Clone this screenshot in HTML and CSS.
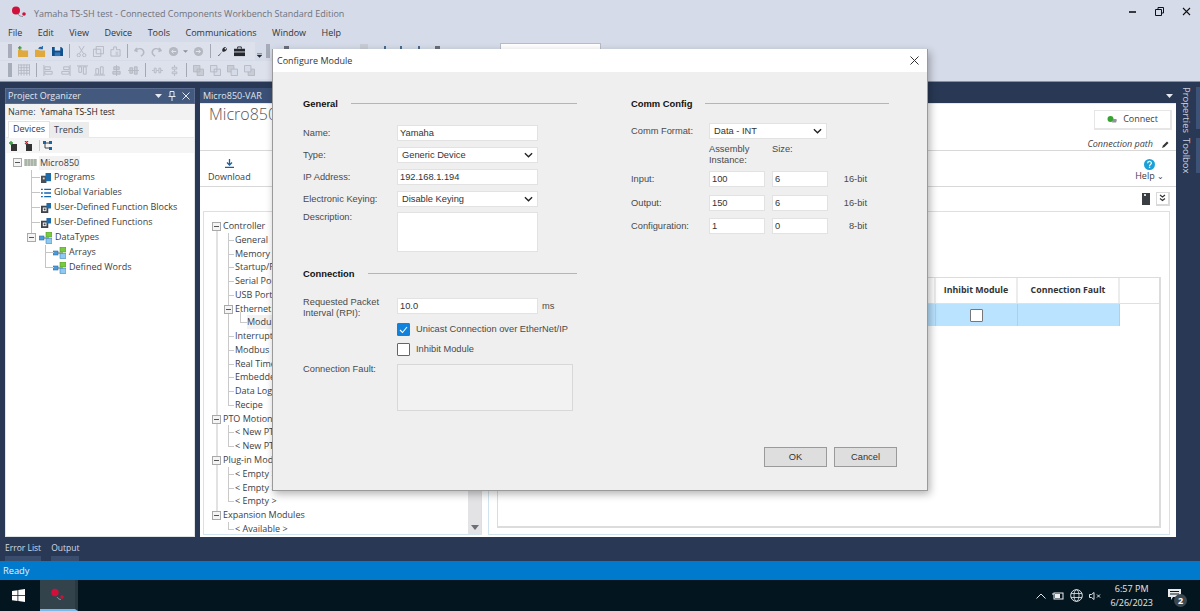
FILE: index.html
```html
<!DOCTYPE html>
<html lang="en">
<head>
<meta charset="utf-8">
<title>Configure Module</title>
<link rel="stylesheet" href="styles.css">
</head>
<body>
<svg class="defs" width="0" height="0">
  <symbol id="i-exp" viewBox="0 0 9 9"><rect x=".5" y=".5" width="8" height="8" fill="#f4f4f4" stroke="#a9a9a9"/><path d="M2 4.5h5" stroke="#555"/></symbol>
  <symbol id="i-prog" viewBox="0 0 11 11"><rect x="0" y="3" width="6" height="8" fill="#4b4f55"/><rect x="5" y="0" width="6" height="9" fill="#1f6aa8"/><rect x="2" y="5" width="2" height="2" fill="#ddd"/></symbol>
  <symbol id="i-list" viewBox="0 0 11 11"><path d="M0 1.5h2M0 5.5h2M0 9.5h2M3.500 1.500h7.500M3.500 5.500h7.500M3.500 9.500h7.500" stroke="#1266b0" stroke-width="1.600"/></symbol>
  <symbol id="i-fn" viewBox="0 0 11 11"><rect x="0" y="3" width="8" height="8" fill="#3f434a"/><rect x="6" y="0" width="5" height="6" fill="#1f6aa8"/><rect x="2" y="5" width="4" height="4" fill="#fff"/><rect x="3" y="6" width="2" height="2" fill="#3f434a"/></symbol>
  <symbol id="i-dt" viewBox="0 0 13 12"><path d="M3 6h7" stroke="#666"/><rect x="0" y="4" width="5" height="4" fill="#4d9bd6" stroke="#2a6ea8" stroke-width=".6"/><rect x="7" y="0" width="6" height="5" fill="#7ac943" stroke="#4e9b21" stroke-width=".6"/><rect x="7" y="6.500" width="6" height="5" fill="#8fc9ef" stroke="#3a86c0" stroke-width=".6"/></symbol>
  <symbol id="i-chev" viewBox="0 0 10 6"><path d="M1 1l4 4 4-4" fill="none" stroke="#222" stroke-width="1.500"/></symbol>
</svg>

<header class="titlebar">
  <svg class="applogo" width="22" height="12" viewBox="0 0 22 12"><circle cx="5" cy="4.500" r="4" fill="#d0103a"/><circle cx="13" cy="8" r="1.800" fill="#d0103a"/><path d="M7 8c1 2 3 2.500 5 2.500" fill="none" stroke="#8a8f98"/></svg>
  <span class="apptitle">Yamaha TS-SH test - Connected Components Workbench Standard Edition</span>
  <div class="winbtns">
    <svg width="9" height="9" viewBox="0 0 9 9"><path d="M1 5h7" stroke="#111" stroke-width="1.600"/></svg>
    <svg width="9" height="9" viewBox="0 0 9 9"><path d="M3 2V.5h5.500V6H7M.5 2.500H6.500V8.500H.5z" fill="none" stroke="#111"/></svg>
    <svg width="9" height="9" viewBox="0 0 9 9"><path d="M1 1l7 7M8 1l-7 7" stroke="#111" stroke-width="1.100"/></svg>
  </div>
</header>

<nav class="menubar">
  <span>File</span><span>Edit</span><span>View</span><span>Device</span><span>Tools</span><span>Communications</span><span>Window</span><span>Help</span>
</nav>

<div class="toolbars">
  <div class="tbrow">
    <div class="tbgroup">
      <i class="grip"></i>
      <svg class="ti" viewBox="0 0 12 12"><path d="M0 4h4l1 1h6v7H0z" fill="#e0a93d"/><path d="M2 0v4M0 2h4" stroke="#3a9a35" stroke-width="1.400"/></svg>
      <svg class="ti" viewBox="0 0 12 12"><path d="M0 4h4l1 1h6v7H0z" fill="#e0a93d"/><path d="M4 3c1-2 3-2 4 0M8 0v3H5" fill="none" stroke="#1a5fa8" stroke-width="1.200"/></svg>
      <svg class="ti" viewBox="0 0 12 12"><path d="M0 1h10l2 2v8H0z" fill="#10508f"/><rect x="3" y="1" width="6" height="4" fill="#dfe6f0"/><rect x="3" y="7" width="6" height="4" fill="#3a78b5"/></svg>
      <i class="sep"></i>
      <svg class="ti" viewBox="0 0 12 12"><path d="M3 0l5 8M9 0L4 8" stroke="#b5b8c0"/><circle cx="3" cy="10" r="1.800" fill="none" stroke="#b5b8c0"/><circle cx="9" cy="10" r="1.800" fill="none" stroke="#b5b8c0"/></svg>
      <svg class="ti" viewBox="0 0 12 12"><path d="M3.500.5h8v8h-8zM.5 3.500h8v8h-8z" fill="none" stroke="#b5b8c0"/></svg>
      <svg class="ti" viewBox="0 0 12 12"><path d="M1 4h3V1h3v3h4v7H1z" fill="none" stroke="#b5b8c0"/><rect x="6" y="6" width="3" height="5" fill="#c8ccd4"/></svg>
      <i class="sep"></i>
      <svg class="ti" viewBox="0 0 12 12"><path d="M3 2l-2 3 3 1M1.500 5c3-3 8-3 9 1 .5 2-1 4-3 5" fill="none" stroke="#b4b8c1" stroke-width="1.600"/></svg>
      <svg class="ti" viewBox="0 0 12 12"><path d="M9 2l2 3-3 1M10.500 5c-3-3-8-3-9 1-.5 2 1 4 3 5" fill="none" stroke="#b4b8c1" stroke-width="1.600"/></svg>
      <svg class="ti" viewBox="0 0 12 12"><circle cx="6" cy="6" r="5" fill="#b4b8c1"/><path d="M9 6H4M6 4L4 6l2 2" fill="none" stroke="#e4e7ef"/></svg>
      <svg class="tdrop" viewBox="0 0 6 3"><path d="M0 0h6L3 3z" fill="#8b8f98"/></svg>
      <svg class="ti" viewBox="0 0 12 12"><circle cx="6" cy="6" r="5" fill="#b4b8c1"/><path d="M3 6h5M6 4l2 2-2 2" fill="none" stroke="#e4e7ef"/></svg>
      <i class="sep"></i>
      <svg class="ti" viewBox="0 0 12 12"><path d="M1 11l5-5c-1-3 1-5 4-5L8 3l1 1 2-2c0 3-2 5-5 4l-4 5z" fill="#26282d"/></svg>
      <svg class="ti" viewBox="0 0 12 12"><path d="M4 3V1h4v2" fill="none" stroke="#26282d"/><rect y="3" width="12" height="8" fill="#26282d"/><path d="M0 6.500h12" stroke="#d6dbe9"/></svg>
      <svg class="tdrop chev" viewBox="0 0 6 5"><path d="M0 0h6M0 2h6L3 5z" fill="#26282d" stroke="#26282d" stroke-width=".5"/></svg>
    </div>
    <div class="tbhidden">
      <i class="grip"></i>
      <i class="mark mk1"></i><i class="mark mk2"></i><i class="mark mk3"></i><i class="mark mk4"></i><i class="mark mk5"></i><i class="mark mk6"></i>
      <div class="tbcombo"></div>
    </div>
  </div>
  <div class="tbrow">
    <div class="tbgroup low">
      <i class="grip"></i>
      <svg class="ti wide" viewBox="0 0 13 12"><path d="M.5 0v12M3.500 0v12M6.500 0v12M9.500 0v12M12.500 0v12M0 .5h13M0 3.500h13M0 6.500h13M0 9.500h13" stroke="#b4b8c1"/></svg>
      <i class="sep"></i>
      <svg class="ti" viewBox="0 0 12 12"><path d="M1 0v12M2 2h6v3H2zM2 7h8v3H2z" fill="none" stroke="#b4b8c1"/></svg>
      <svg class="ti" viewBox="0 0 12 12"><path d="M11 0v12M4 2h6v3H4zM2 7h8v3H2z" fill="none" stroke="#b4b8c1"/></svg>
      <svg class="ti" viewBox="0 0 12 12"><path d="M0 1h12M2 2v6h3V2zM7 2v8h3V2z" fill="none" stroke="#b4b8c1"/></svg>
      <svg class="ti" viewBox="0 0 12 12"><path d="M0 11h12M2 4v6h3V4zM7 2v8h3V2z" fill="none" stroke="#b4b8c1"/></svg>
      <svg class="ti" viewBox="0 0 12 12"><path d="M6 0v12M3 2h6v3H3zM2 7h8v3H2z" fill="#c8ccd4" stroke="#b4b8c1"/></svg>
      <svg class="ti" viewBox="0 0 12 12"><path d="M0 6h12M2 3v6h3V3zM7 2v8h3V2z" fill="#c8ccd4" stroke="#b4b8c1"/></svg>
      <i class="sep"></i>
      <svg class="ti" viewBox="0 0 12 12"><path d="M0 6h2M5 6h2M10 6h2M2.500 3.500h2v5h-2zM7.500 3.500h2v5h-2z" fill="none" stroke="#b4b8c1"/></svg>
      <svg class="ti" viewBox="0 0 12 12"><path d="M6 0v2M6 5v2M6 10v2M3.500 2.500h5v2h-5zM3.500 7.500h5v2h-5z" fill="none" stroke="#b4b8c1"/></svg>
      <i class="sep"></i>
      <svg class="ti" viewBox="0 0 12 12"><path d="M.5.500h7v7h-7zM4.500 4.500h7v7h-7z" fill="#c8ccd4" stroke="#b4b8c1"/></svg>
      <svg class="ti" viewBox="0 0 12 12"><path d="M.5.500h7v7h-7zM4.500 4.500h7v7h-7z" fill="#d6dbe9" stroke="#b4b8c1"/></svg>
      <svg class="ti" viewBox="0 0 12 12"><path d="M.5.500h7v7h-7z" fill="#c8ccd4" stroke="#b4b8c1"/><path d="M4.500 4.500h7v7h-7z" fill="#d6dbe9" stroke="#b4b8c1"/></svg>
      <svg class="ti" viewBox="0 0 12 12"><path d="M4.500 4.500h7v7h-7z" fill="#c8ccd4" stroke="#b4b8c1"/><path d="M.5.500h7v7h-7z" fill="#d6dbe9" stroke="#b4b8c1"/></svg>
    </div>
  </div>
</div>

<main class="workspace">
  <section class="organizer">
    <div class="panelhead">
      <span>Project Organizer</span>
      <span class="panelctl">
        <svg width="7" height="4" viewBox="0 0 7 4"><path d="M0 0h7L3.500 4z" fill="#e6e9f0"/></svg>
        <svg width="8" height="10" viewBox="0 0 8 10"><path d="M2 .5h4v5H2zM.5 5.500h7M4 6v4" fill="none" stroke="#e6e9f0"/></svg>
        <svg width="8" height="8" viewBox="0 0 8 8"><path d="M.5.500l7 7M7.500.500l-7 7" stroke="#e6e9f0"/></svg>
      </span>
    </div>
    <div class="namerow"><span>Name:</span><span class="nameval">Yamaha TS-SH test</span></div>
    <div class="tabs"><span class="tab active">Devices</span><span class="tab">Trends</span></div>
    <div class="orgtools">
      <svg width="9" height="10" viewBox="0 0 9 10"><rect x="2" y="3" width="6" height="7" fill="#333"/><path d="M2 0v4M0 2h4" stroke="#2c9a35" stroke-width="1.300"/></svg>
      <svg width="9" height="10" viewBox="0 0 9 10"><rect x="2" y="3" width="6" height="7" fill="#333"/><path d="M1 0l3 3M4 0L1 3" stroke="#d0202a" stroke-width="1.200"/></svg>
      <i class="orgsep"></i>
      <svg width="9" height="9" viewBox="0 0 9 9"><path d="M2 2h5M2 2v5h5" fill="none" stroke="#444"/><rect width="3" height="3" fill="#1566ad"/><rect x="6" y="0" width="3" height="3" fill="#1566ad"/><rect x="6" y="6" width="3" height="3" fill="#1566ad"/></svg>
    </div>
    <ul class="otree">
      <li class="orow root"><svg class="oexp"><use href="#i-exp"/></svg>
        <svg width="13" height="7" viewBox="0 0 13 7"><rect width="13" height="7" fill="#c7cbc4"/><path d="M2 0v7M5 0v7M8 0v7M11 0v7" stroke="#8aa08a"/></svg><span class="hl">Micro850</span></li>
      <li class="orow l1 first"><svg class="oi"><use href="#i-prog"/></svg><span>Programs</span></li>
      <li class="orow l1"><svg class="oi"><use href="#i-list"/></svg><span>Global Variables</span></li>
      <li class="orow l1"><svg class="oi"><use href="#i-fn"/></svg><span>User-Defined Function Blocks</span></li>
      <li class="orow l1"><svg class="oi"><use href="#i-fn"/></svg><span>User-Defined Functions</span></li>
      <li class="orow l1d"><svg class="oexp e2"><use href="#i-exp"/></svg><svg class="odt"><use href="#i-dt"/></svg><span>DataTypes</span></li>
      <li class="orow l2"><svg class="odt"><use href="#i-dt"/></svg><span>Arrays</span></li>
      <li class="orow l2 last"><svg class="odt"><use href="#i-dt"/></svg><span>Defined Words</span></li>
    </ul>
  </section>

  <section class="document">
    <div class="tabstrip">
      <span class="doctab">Micro850-VAR</span>
      <svg width="7" height="4" viewBox="0 0 7 4"><path d="M0 0h7L3.500 4z" fill="#e6e9f0"/></svg>
    </div>
    <div class="paper">
      <div class="dochead">
        <div class="doctitle">Micro850</div>
        <div class="connectcol">
          <button class="connect">
            <svg width="11" height="8" viewBox="0 0 11 8"><circle cx="3.500" cy="3" r="3" fill="#35a52f"/><path d="M6 3h3c1 0 1 2 0 3.500H5" fill="#8f939a"/></svg>
            Connect</button>
          <div class="connpath"><em>Connection path</em>
            <svg width="7" height="7" viewBox="0 0 7 7"><path d="M0 7l1-2.500L5 .5 6.500 2 2.500 6z" fill="#333"/></svg></div>
        </div>
      </div>
      <div class="ribbon">
        <div class="ribbtn">
          <svg width="9" height="9" viewBox="0 0 9 9"><path d="M4.500 0v5M2 3.500l2.500 2.500L7 3.500M0 8.500h9" fill="none" stroke="#1a5ea0" stroke-width="1.300"/></svg>
          <span>Download</span>
        </div>
        <div class="ribbtn help">
          <svg width="11" height="11" viewBox="0 0 11 11"><circle cx="5.500" cy="5.500" r="5.500" fill="#1ba1d8"/><path d="M3.700 4.200c0-2.300 3.700-2.300 3.700-.1 0 1.400-1.900 1.300-1.900 2.900" fill="none" stroke="#fff" stroke-width="1.200"/><rect x="4.900" y="7.600" width="1.300" height="1.300" fill="#fff"/></svg>
          <span>Help <small class="tinychev">&#8964;</small></span>
        </div>
      </div>
      <div class="subbar">
        <svg width="8" height="12" viewBox="0 0 8 12"><rect width="8" height="12" fill="#3a3d42"/><rect x="2" y="1" width="2" height="2" fill="#ddd"/></svg>
        <button class="collapse"><svg width="7" height="8" viewBox="0 0 7 8"><path d="M1 1l2.500 2L6 1M1 4.500l2.500 2 2.500-2" fill="none" stroke="#333" stroke-width="1.200"/></svg></button>
      </div>
      <div class="panes">
        <div class="ctreepane">
          <ul class="ctree">
            <li class="c0"><svg class="cexp"><use href="#i-exp"/></svg>Controller</li>
            <li class="c1">General</li>
            <li class="c1">Memory</li>
            <li class="c1">Startup/Faults</li>
            <li class="c1">Serial Port</li>
            <li class="c1">USB Port</li>
            <li class="c1 branch"><svg class="cexp"><use href="#i-exp"/></svg>Ethernet</li>
            <li class="c2"><span class="sel">Module Info</span></li>
            <li class="c1">Interrupts</li>
            <li class="c1">Modbus Mapping</li>
            <li class="c1">Real Time Clock</li>
            <li class="c1">Embedded I/O</li>
            <li class="c1">Data Log</li>
            <li class="c1 last">Recipe</li>
            <li class="c0"><svg class="cexp"><use href="#i-exp"/></svg>PTO Motion</li>
            <li class="c1">&lt; New PTO Axis &gt;</li>
            <li class="c1 last">&lt; New PTO Axis &gt;</li>
            <li class="c0"><svg class="cexp"><use href="#i-exp"/></svg>Plug-in Modules</li>
            <li class="c1">&lt; Empty &gt;</li>
            <li class="c1">&lt; Empty &gt;</li>
            <li class="c1 last">&lt; Empty &gt;</li>
            <li class="c0"><svg class="cexp"><use href="#i-exp"/></svg>Expansion Modules</li>
            <li class="c1 last">&lt; Available &gt;</li>
          </ul>
          <div class="cscroll"><svg width="8" height="5" viewBox="0 0 8 5"><path d="M0 0h8L4 5z" fill="#6d6f78"/></svg></div>
        </div>
        <div class="rightpane">
          <div class="tableframe">
            <div class="thead">
              <span class="th col-a"></span><span class="th col-b">Inhibit Module</span><span class="th col-c">Connection Fault</span>
            </div>
            <div class="trow">
              <span class="td col-a"></span><span class="td col-b"><i class="tcheck"></i></span><span class="td col-c"></span>
            </div>
          </div>
        </div>
      </div>
    </div>
  </section>

  <aside class="rail">
    <div class="railitem prop"><span>Properties</span><i></i></div>
    <div class="railitem tool"><span>Toolbox</span><i></i></div>
  </aside>
</main>

<div class="bottomtabs">
  <div class="btab errl">Error List</div>
  <div class="btab outp">Output</div>
</div>
<div class="statusbar">Ready</div>

<footer class="taskbar">
  <svg class="winlogo" width="13" height="13" viewBox="0 0 13 13"><path d="M0 2l5.500-.8v5H0zM6.300 1.100L13 0v6.200H6.300zM0 7h5.500v5L0 11.200zM6.300 7H13v6l-6.700-1z" fill="#fff"/></svg>
  <div class="taskapp">
    <svg width="16" height="13" viewBox="0 0 16 13"><circle cx="5" cy="4.500" r="3.700" fill="#d0103a"/><circle cx="12" cy="9" r="1.700" fill="#d0103a"/><path d="M7 9c1 2 3 2.500 4 2.500" fill="none" stroke="#8a8f98"/></svg>
  </div>
  <div class="tray">
    <svg width="10" height="6" viewBox="0 0 10 6"><path d="M.5 5.500L5 1l4.500 4.500" fill="none" stroke="#dfe3e6"/></svg>
    <svg width="12" height="8" viewBox="0 0 12 8"><rect x="2" y="1" width="9" height="6" fill="none" stroke="#eee"/><rect x="3" y="2" width="5" height="4" fill="#eee"/><path d="M0 2h2" stroke="#eee"/></svg>
    <svg width="13" height="13" viewBox="0 0 13 13"><circle cx="6.500" cy="6.500" r="5.800" fill="none" stroke="#e8e8e8"/><ellipse cx="6.500" cy="6.500" rx="2.500" ry="5.800" fill="none" stroke="#e8e8e8" stroke-width=".8"/><path d="M1 4.500h11M1 8.500h11" stroke="#e8e8e8" stroke-width=".8"/></svg>
    <svg width="12" height="8" viewBox="0 0 12 8"><path d="M.5 2.500h2L5 .5v7l-2.500-2h-2z" fill="none" stroke="#e0e0e0"/><path d="M8 2.500l3 3M11 2.500l-3 3" stroke="#e0e0e0"/></svg>
    <div class="clock"><span>6:57 PM</span><span>6/26/2023</span></div>
    <div class="notif">
      <svg width="13" height="12" viewBox="0 0 13 12"><path d="M0 0h13v8H5L3 11V8H0z" fill="#e8eaec"/><path d="M2 2.500h9M2 5h9" stroke="#0a1a24"/></svg>
      <span class="badge">2</span>
    </div>
  </div>
</footer>

<div class="dialog" role="dialog">
  <div class="dlgtitle"><span>Configure Module</span>
    <svg width="9" height="9" viewBox="0 0 9 9"><path d="M.5.500l8 8M8.500.500l-8 8" stroke="#333"/></svg>
  </div>
  <div class="dlgbody">
    <div class="colL">
      <h3 class="sect"><span>General</span><i></i></h3>
      <div class="frow first"><label>Name:</label><div class="field">Yamaha</div></div>
      <div class="frow"><label>Type:</label><div class="field select"><span>Generic Device</span><svg><use href="#i-chev"/></svg></div></div>
      <div class="frow"><label>IP Address:</label><div class="field">192.168.1.194</div></div>
      <div class="frow"><label>Electronic Keying:</label><div class="field select"><span>Disable Keying</span><svg><use href="#i-chev"/></svg></div></div>
      <div class="frow desc"><label>Description:</label><div class="field area"></div></div>
      <h3 class="sect conn"><span>Connection</span><i></i></h3>
      <div class="frow rpi"><label>Requested Packet<br>Interval (RPI):</label><div class="field">10.0</div><span class="unit">ms</span></div>
      <div class="check c1st"><i class="box on"><svg width="9" height="8" viewBox="0 0 9 8"><path d="M1 4l2.500 2.500L8 1" fill="none" stroke="#fff" stroke-width="1.100"/></svg></i><span>Unicast Connection over EtherNet/IP</span></div>
      <div class="check"><i class="box"></i><span>Inhibit Module</span></div>
      <div class="frow fault"><label>Connection Fault:</label><div class="faultbox"></div></div>
    </div>
    <div class="colR">
      <h3 class="sect"><span>Comm Config</span><i></i></h3>
      <div class="rrow fmt"><label>Comm Format:</label><div class="field select wide"><span>Data - INT</span><svg><use href="#i-chev"/></svg></div></div>
      <div class="rrow heads"><label></label><span class="h1">Assembly<br>Instance:</span><span class="h2">Size:</span></div>
      <div class="rrow r-input"><label>Input:</label><div class="field num">100</div><div class="field num">6</div><span class="bits">16-bit</span></div>
      <div class="rrow r-output"><label>Output:</label><div class="field num">150</div><div class="field num">6</div><span class="bits">16-bit</span></div>
      <div class="rrow"><label>Configuration:</label><div class="field num">1</div><div class="field num">0</div><span class="bits">8-bit</span></div>
    </div>
  </div>
  <div class="dlgfoot"><button class="btn">OK</button><button class="btn">Cancel</button></div>
</div>
</body>
</html>
```
FILE: styles.css
```css
* { box-sizing: border-box; }
html, body { margin: 0; padding: 0; }
body {
  width: 1200px; height: 611px; overflow: hidden; position: relative;
  display: flex; flex-direction: column;
  background: #d6dbe9; color: #3a3e46;
  font: 9px/1.2 "Open Sans", "Noto Sans", sans-serif;
}
ul { list-style: none; margin: 0; padding: 0; }
i, em { display: block; }
em { font-style: italic; }
button { font: inherit; color: inherit; }
.defs { position: absolute; }

/* window chrome */
.titlebar { height: 24px; display: flex; align-items: center; padding-left: 11px; color: #6d727c; flex: none; }
.applogo { flex: none; margin-right: 1px; }
.apptitle { margin-top: 4px; }
.winbtns { margin-left: auto; display: flex; gap: 18px; padding: 0 9px 2px 0; }
.menubar { height: 18px; flex: none; display: flex; gap: 15.500px; padding-left: 8px; align-items: center; color: #30343c; }
.toolbars { height: 39px; flex: none; display: flex; flex-direction: column; }
.tbrow { height: 19px; display: flex; }
.tbrow + .tbrow { height: 20px; }
.tbgroup { display: flex; align-items: center; gap: 6px; padding-left: 8px; background: #dde1ec; height: 18px; width: 255px; position: relative; }
.tbgroup.low { width: 272px; gap: 6px; }
.tbhidden { display: flex; align-items: flex-start; height: 18px; padding-left: 11px; flex: 1; }
.grip { width: 4px; height: 14px; background-image: radial-gradient(#a4a9b6 0.7px, transparent 0.8px); background-size: 2px 2px; flex: none; }
.tbhidden .grip { margin-top: 2px; }
.sep { width: 1px; height: 14px; background: #a3a8b4; flex: none; }
.ti { width: 11px; height: 11px; flex: none; }
.ti.wide { width: 12px; height: 12px; }
.tdrop { width: 5px; height: 3px; flex: none; margin: 0 -1px 0 -2px; }
.tdrop.chev { position: absolute; left: 257px; top: 11px; width: 5px; height: 5px; margin: 0; }
.mark { width: 5px; height: 3px; background: #6a6f7c; flex: none; margin-top: 4px; }
.mk1 { margin-left: 14px; }
.mk2 { margin-left: 71px; background: #c8ccd4; height: 5px; margin-top: 2px; width: 8px; }
.mk3 { margin-left: 16px; width: 2px; background: #4a6a90; }
.mk4 { margin-left: 14px; width: 2px; background: #4a6a90; }
.mk5 { margin-left: 16px; width: 2px; background: #4a6a90; }
.mk6 { margin-left: 15px; }
.tbcombo { width: 101px; height: 18px; margin-left: 60px; margin-top: 1px; background: #fff; border: 1px solid #b8bcc6; }

.workspace { height: 460px; flex: none; display: flex; background: #293955; padding: 6px 0 4px 5px; border-top: 1px solid #8490a8; }
.organizer { width: 190px; flex: none; background: #fff; border: 1px solid #dfe2e6; margin-right: 5px; display: flex; flex-direction: column; }
.panelhead { height: 16px; flex: none; background: #44597e; color: #e3e7ef; display: flex; justify-content: space-between; align-items: center; padding: 0 4px 0 2px; margin: -1px -1px 0; border: 1px solid #5a6d90; }
.panelctl { display: flex; align-items: center; gap: 6px; }
.namerow { height: 16px; flex: none; display: flex; gap: 5px; align-items: center; background: #f2f2f2; padding-left: 2px; }
.nameval { font-size: 8.500px; color: #222; }
.tabs { height: 18px; flex: none; display: flex; background: #fff; padding-top: 1px; padding-left: 2px; border-bottom: 1px solid #e8e8e8; }
.tab { background: #ececec; padding: 3px 6px 0 4px; height: 16px; margin-top: 1px; }
.tab.active { background: #fff; border: 1px solid #e3e3e3; border-bottom: 0; margin-top: 0; height: 17px; padding: 2px 4px 0; }
.orgtools { height: 15px; flex: none; display: flex; align-items: center; gap: 6px; padding-left: 3px; background: #f5f5f5; }
.orgsep { width: 1px; height: 11px; background: #ccc; margin-right: -3px; }
.otree { padding-top: 2px; color: #3a3e46; }
.orow { height: 15px; display: flex; align-items: center; position: relative; gap: 3px; white-space: nowrap; }
.oexp { width: 9px; height: 9px; position: absolute; left: 7px; top: 3px; }
.oexp.e2 { left: 21px; }
.oi { width: 10px; height: 10px; flex: none; }
.odt { width: 13px; height: 12px; flex: none; }
.root { padding-left: 18px; }
.root .hl { background: #f2f2f2; padding: 0 1px; margin-left: -1px; height: 14px; line-height: 14px; }
.l1 { padding-left: 35px; }
.l1d { padding-left: 33px; }
.l2 { padding-left: 47px; }
.l1::before, .l1d::before, .l2::before { content: ""; position: absolute; width: 1px; background: #c4c4c4; top: 0; bottom: 0; }
.l1::before { left: 25px; }
.l1d::before { left: 25px; bottom: 50%; }
.l2::before { left: 39px; }
.l2.last::before { bottom: 50%; }
.l1::after, .l2::after { content: ""; position: absolute; height: 1px; width: 8px; background: #c4c4c4; top: 7px; }
.l1::after { left: 26px; }
.l2::after { left: 40px; }

.document { width: 976px; flex: none; display: flex; flex-direction: column; }
.tabstrip { height: 15px; display: flex; justify-content: space-between; align-items: center; padding-right: 3px; flex: none; }
.doctab { background: #3b5076; color: #dfe4ee; height: 15px; width: 72px; padding-left: 3px; line-height: 15px; }
.paper { flex: 1; background: #fff; border-top: 1px solid #f3eab8; display: flex; flex-direction: column; min-height: 0; }
.dochead { height: 47px; flex: none; display: flex; justify-content: space-between; border-bottom: 1px solid #d8d8d8; }
.doctitle { font-size: 16px; color: #555; padding: 1px 0 0 9px; font-weight: 300; }
.connectcol { width: 88px; padding-top: 6px; display: flex; flex-direction: column; align-items: flex-end; padding-right: 4px; }
.connect { width: 78px; height: 24px; border: 1px solid #e6e6e6; border-width: 1px 2px 2px 1px; background: #fff; display: flex; align-items: center; justify-content: center; gap: 5px; padding: 0; }
.connpath { width: 88px; display: flex; justify-content: flex-end; align-items: center; gap: 9px; margin: 9px 3px 0 0; white-space: nowrap; }
.ribbon { height: 36px; flex: none; display: flex; justify-content: space-between; border-bottom: 1px solid #d8d8d8; }
.ribbtn { display: flex; flex-direction: column; align-items: center; gap: 4px; padding: 8px 0 0 8px; }
.ribbtn.help { padding: 8px 12px 0 0; gap: 1px; }
.tinychev { font-size: 8px; }
.subbar { height: 23px; flex: none; display: flex; justify-content: flex-end; align-items: center; gap: 6px; padding-right: 6px; }
.collapse { width: 14px; height: 14px; border: 1px solid #d9d9d9; border-width: 1px 2px 2px 1px; background: #fff; padding: 0; display: flex; align-items: center; justify-content: center; }
.panes { flex: 1; display: flex; padding: 1px 6px 2px 3px; gap: 6px; min-height: 0; }
.ctreepane { width: 279px; flex: none; border: 1px solid #cfe4ee; position: relative; overflow: hidden; display: flex; }
.ctree { flex: 1; padding: 7px 0 0 0; position: relative; color: #3a3e46; }
.ctree::before { content: ""; position: absolute; left: 12px; top: 17px; height: 290px; width: 2px; background: #e2e2e2; }
.ctree li { height: 13.770px; line-height: 13.770px; position: relative; white-space: nowrap; }
.c0 { padding-left: 19px; }
.c1 { padding-left: 31px; }
.c2 { padding-left: 43px; }
.cexp { width: 9px; height: 9px; position: absolute; left: 8px; top: 3px; z-index: 1; }
.c1 .cexp { left: 20px; }
.c1.branch::after { display: none; }
.c1::before { content: ""; position: absolute; left: 24px; top: 0; bottom: 0; width: 1px; background: #c9c9c9; }
.c1.last::before { bottom: 50%; }
.c1::after { content: ""; position: absolute; left: 24px; top: 7px; width: 6px; height: 1px; background: #c9c9c9; }
.c2::before { content: ""; position: absolute; left: 24px; top: 0; bottom: 0; width: 1px; background: #c9c9c9; }
.c2::after { content: ""; position: absolute; left: 36px; top: -3px; height: 10px; width: 6px; border-left: 1px solid #c9c9c9; border-bottom: 1px solid #c9c9c9; }
.sel { background: #f2f2f2; display: inline-block; }
.cscroll { width: 13px; flex: none; background: #e3e3e6; display: flex; align-items: flex-end; justify-content: center; padding-bottom: 4px; margin-top: -1px; }
.rightpane { flex: 1; border: 1px solid #cfe4ee; padding: 65px 8px 6px 8px; display: flex; }
.tableframe { flex: 1; border: 1px solid #dcdcdc; border-width: 1px 2px 2px 1px; }
.thead { height: 26px; display: flex; justify-content: flex-end; border-bottom: 1px solid #e0e0e0; padding-right: 39px; }
.th { display: flex; align-items: center; justify-content: center; font-weight: 700; font-size: 8.800px; color: #333; border-right: 2px solid #ececec; }
.trow { height: 22px; display: flex; justify-content: flex-end; padding-right: 39px; }
.td { background: #b9e3ff; display: flex; align-items: center; justify-content: center; border-right: 1px solid #a8d3ee; }
.col-a { flex: 1; }
.col-b { width: 82px; }
.col-c { width: 102px; }
.tcheck { width: 13px; height: 13px; border: 1px solid #777; background: #fff; border-radius: 1px; }

.rail { flex: 1; display: flex; flex-direction: column; gap: 9px; margin-top: -1px; color: #c8d0df; }
.railitem { display: flex; justify-content: space-between; }
.railitem span { writing-mode: vertical-rl; margin-left: 5px; font-size: 9.500px; }
.railitem i { width: 4px; background: #3d5277; }
.prop { height: 42px; }
.tool { height: 35px; }

.bottomtabs { height: 20px; flex: none; background: #293955; color: #d3d9e5; display: flex; gap: 10px; padding-left: 5px; font-size: 8.500px; }
.btab { height: 20px; border-bottom: 5px solid #3b4d6d; line-height: 14px; }
.statusbar { height: 19px; flex: none; background: #007acc; color: #e6f2fa; padding-left: 3px; line-height: 19px; font-size: 9.300px; }
.taskbar { height: 31px; flex: none; background: #03161f; display: flex; align-items: center; position: relative; }
.winlogo { margin-left: 12px; }
.taskapp { margin-left: 15px; width: 38px; height: 31px; background: #33434c; border-bottom: 2px solid #76b9ed; border-right: 3px solid #2a3840; display: flex; align-items: center; justify-content: center; }
.tray { margin-left: auto; display: flex; align-items: center; color: #e8e8e8; gap: 6px; padding-right: 19px; }
.clock { display: flex; flex-direction: column; align-items: center; line-height: 14px; margin: 0 9px 0 3px; }
.notif { position: relative; width: 13px; height: 14px; }
.badge { position: absolute; left: 6px; top: 5px; width: 13px; height: 13px; border-radius: 50%; background: #3c4850; color: #fff; font-weight: 700; text-align: center; line-height: 13px; }

/* dialog */
.dialog {
  position: absolute; left: 272px; top: 49px; width: 656px; height: 442px;
  background: #efefef; border: 1px solid #9a9a9a; border-width: 0 1px 1px 1px;
  box-shadow: 2px 3px 8px rgba(0,0,0,.3);
  display: flex; flex-direction: column;
  font: 9.300px/1.1 "Liberation Sans", Arial, sans-serif; color: #4a4a4a;
}
.dlgtitle { height: 23px; flex: none; background: #fff; display: flex; justify-content: space-between; align-items: center; padding: 0 8px 0 4px; font: 9px "Open Sans", sans-serif; color: #333; }
.dlgbody { flex: 1; display: flex; padding: 24px 0 0 30px; min-height: 0; }
.colL { width: 274px; margin-right: 54px; flex: none; }
.colR { width: 258px; flex: none; }
.sect { margin: 0; height: 14px; display: flex; align-items: center; gap: 13px; font-size: 9.400px; font-weight: 700; color: #111; }
.sect span { margin-top: 2px; }
.sect i { flex: 1; height: 1px; background: #b5b5b5; }
.sect.conn { margin-top: 14px; }
label { display: block; flex: none; }
.frow { display: flex; align-items: center; margin-top: 6px; }
.frow.first { margin-top: 15px; }
.frow label { width: 94px; }
.field { height: 16px; width: 141px; background: #fff; border: 1px solid #e2e2e2; padding: 0 2px; line-height: 14px; color: #333; flex: none; }
.select { display: flex; align-items: center; justify-content: space-between; padding: 0 4px; }
.select svg { width: 9px; height: 6px; }
.desc { align-items: flex-start; margin-top: 5px; }
.desc .area { height: 40px; }
.rpi { margin-top: 18px; align-items: flex-start; }
.rpi label { line-height: 11px; margin-top: -1px; }
.unit { margin: 3px 0 0 4px; }
.check { display: flex; align-items: center; gap: 6px; margin: 7px 0 0 94px; height: 13px; white-space: nowrap; }
.check.c1st { margin-top: 4px; }
.box { width: 13px; height: 13px; border: 1px solid #666; background: #fff; border-radius: 1px; display: flex; align-items: center; justify-content: center; }
.box.on { background: #0e82dc; border-color: #0e82dc; }
.fault { align-items: flex-start; margin-top: 8px; }
.faultbox { width: 176px; height: 47px; background: #f2f2f2; border: 1px solid #d8d8d8; flex: none; }
.rrow { display: flex; align-items: center; height: 16px; margin-top: 7px; }
.rrow label { width: 78px; }
.rrow.fmt { margin-top: 13px; }
.field.wide { width: 118px; }
.rrow.heads { height: 22px; margin-top: 5px; align-items: flex-start; line-height: 10.500px; }
.rrow.r-input { margin-top: 5px; }
.rrow.r-output { margin-top: 8px; }
.h1 { width: 63px; }
.num { width: 56px; margin-right: 7px; }
.num + .num { margin-right: 0; }
.bits { width: 39px; text-align: right; }
.dlgfoot { flex: none; display: flex; justify-content: flex-end; gap: 7px; padding: 0 30px 23px 0; }
.btn { width: 63px; height: 20px; background: #dedede; border: 1px solid #9a9a9a; padding: 0; font: 9.300px "Liberation Sans", Arial, sans-serif; color: #333; }
```
